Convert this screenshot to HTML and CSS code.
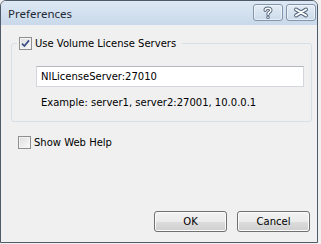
FILE: index.html
```html
<!DOCTYPE html>
<html lang="en">
<head>
    <meta charset="UTF-8">
    <title>Preferences</title>
    <link rel="stylesheet" href="styles.css">
</head>
<body>

    <div class="window">
        <div class="titlebar">
            <span class="title">Preferences</span>
            <div class="caption-btns">
                <span class="cap-btn">
                    <svg width="28" height="15" viewBox="0 0 28 15">
                        <path d="M11.2 5.2 C11.2 2.6 16.8 2.6 16.8 5.2 C16.8 7.2 14 7.2 14 9.4 M14 12.2 L14 12.4" fill="none" stroke="#56677d" stroke-width="3.4" stroke-linecap="round"/>
                        <path d="M11.2 5.2 C11.2 2.6 16.8 2.6 16.8 5.2 C16.8 7.2 14 7.2 14 9.4 M14 12.2 L14 12.4" fill="none" stroke="#fff" stroke-width="1.5" stroke-linecap="round"/>
                    </svg>
                </span>
                <span class="cap-btn">
                    <svg width="28" height="15" viewBox="0 0 28 15">
                        <path d="M9 4.5 L19 10.5 M19 4.5 L9 10.5" fill="none" stroke="#56677d" stroke-width="4" stroke-linecap="round"/>
                        <path d="M9 4.5 L19 10.5 M19 4.5 L9 10.5" fill="none" stroke="#fff" stroke-width="2" stroke-linecap="round"/>
                    </svg>
                </span>
            </div>
        </div>

        <div class="client">
            <fieldset class="group">
                <legend class="group-title">
                    <label class="check">
                        <span class="box">
                            <svg width="11" height="11" viewBox="0 0 11 11">
                                <path d="M2 5.6 L4.4 8 L9 2.4" fill="none" stroke="#3b4f85" stroke-width="1.7"/>
                            </svg>
                        </span>
                        Use Volume License Servers
                    </label>
                </legend>
                <div class="textbox">NILicenseServer:27010</div>
                <div class="example">Example: server1, server2:27001, 10.0.0.1</div>
            </fieldset>

            <label class="check web-help">
                <span class="box"></span>
                Show Web Help
            </label>

            <div class="actions">
                <button class="btn">OK</button>
                <button class="btn">Cancel</button>
            </div>
        </div>
    </div>

</body>
</html>
```

FILE: styles.css
```css
body {
    margin: 0;
    background-color: #f0f0f0;
    font-family: 'DejaVu Sans', sans-serif;
    font-size: 10px;
    color: #000;
}

.window {
    width: 316px;
    height: 241px;
    border: 1px solid #4f5b69;
    border-radius: 6px 6px 0 0;
    background-color: #f0f0f0;
    display: flex;
    flex-direction: column;
}

.titlebar {
    height: 24px;
    display: flex;
    align-items: flex-start;
    border-radius: 5px 5px 0 0;
    background: linear-gradient(#dde8f4, #c9d9ea);
}

.title {
    font-family: 'Noto Sans', sans-serif;
    font-size: 11.5px;
    line-height: 16px;
    margin: 5px 0 0 7px;
    color: #1f2a36;
}

.caption-btns {
    margin: 3px 1px 0 auto;
    display: flex;
    gap: 3px;
}

.cap-btn {
    width: 28px;
    height: 15px;
    border: 1px solid #8394ab;
    border-radius: 3px;
    background: linear-gradient(#e4ecf6, #ccdbea);
    box-shadow: inset 0 0 0 1px rgba(255, 255, 255, 0.5);
}

.cap-btn svg {
    display: block;
}

.client {
    flex: 1;
    padding: 12px 5px 10px 10px;
    display: flex;
    flex-direction: column;
}

.group {
    margin: 0;
    padding: 0 7px 12px 24px;
    border: 1px solid #d5dfe5;
    border-radius: 3px;
}

.group-title {
    margin-left: -19px;
    width: 161px;
    padding: 0 2px;
}

.check {
    display: flex;
    align-items: center;
    gap: 3px;
    line-height: 13px;
    white-space: nowrap;
}

.box {
    width: 11px;
    height: 11px;
    border: 1px solid #8f8f8f;
    background: linear-gradient(135deg, #dcdcdc, #fbfbfb);
    box-shadow: inset 0 0 0 1px #f4f4f4;
    flex-shrink: 0;
}

.box svg {
    display: block;
}

.textbox {
    margin-top: 16px;
    height: 19px;
    line-height: 19px;
    padding-left: 4px;
    border: 1px solid #d3d6db;
    border-top-color: #b4b7bd;
    background-color: #fff;
}

.example {
    margin-top: 9px;
    padding-left: 5px;
    line-height: 13px;
}

.web-help {
    margin: 14px 0 0 7px;
}

.actions {
    margin-top: auto;
    margin-right: 2px;
    display: flex;
    justify-content: flex-end;
    gap: 10px;
}

.btn {
    width: 73px;
    height: 21px;
    padding: 0;
    font-family: 'DejaVu Sans', sans-serif;
    font-size: 10px;
    color: #000;
    border: 1px solid #707070;
    border-radius: 3px;
    background: linear-gradient(#f2f2f2 0%, #ebebeb 50%, #dddddd 50%, #cfcfcf 100%);
    box-shadow: inset 0 0 0 1px #fbfbfb;
}
```
